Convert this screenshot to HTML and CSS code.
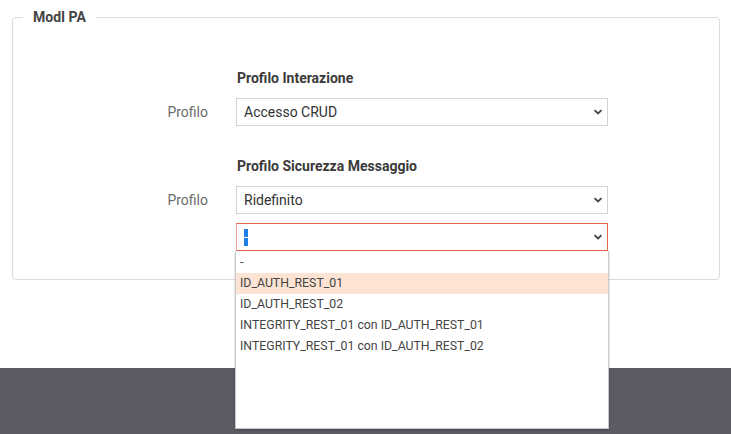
FILE: index.html
```html
<!DOCTYPE html>
<html lang="it">
<head>
<meta charset="utf-8">
<title>ModI PA</title>
<link rel="stylesheet" href="styles.css">
</head>
<body>
<main class="page">
  <section class="panel">
    <span class="legend">ModI PA</span>

    <div class="row head-row head-first">
      <div></div>
      <div class="heading">Profilo Interazione</div>
    </div>
    <div class="row sel-row gap-large">
      <label class="label">Profilo</label>
      <div class="select"><span class="value">Accesso CRUD</span><svg class="chev" width="10" height="6" viewBox="0 0 10 6"><path d="M1.5 1.2 L5 4.5 L8.5 1.2" fill="none" stroke="#444" stroke-width="1.8"/></svg></div>
    </div>

    <div class="row head-row">
      <div></div>
      <div class="heading">Profilo Sicurezza Messaggio</div>
    </div>
    <div class="row sel-row gap-small">
      <label class="label">Profilo</label>
      <div class="select"><span class="value">Ridefinito</span><svg class="chev" width="10" height="6" viewBox="0 0 10 6"><path d="M1.5 1.2 L5 4.5 L8.5 1.2" fill="none" stroke="#444" stroke-width="1.8"/></svg></div>
    </div>
    <div class="row sel-row">
      <div></div>
      <div class="select select-open">
        <span class="caret"></span>
        <svg class="chev" width="10" height="6" viewBox="0 0 10 6"><path d="M1.5 1.2 L5 4.5 L8.5 1.2" fill="none" stroke="#444" stroke-width="1.8"/></svg>
        <ul class="options">
          <li>-</li>
          <li class="active">ID_AUTH_REST_01</li>
          <li>ID_AUTH_REST_02</li>
          <li>INTEGRITY_REST_01 con ID_AUTH_REST_01</li>
          <li>INTEGRITY_REST_01 con ID_AUTH_REST_02</li>
        </ul>
      </div>
    </div>
  </section>
</main>
<footer class="footer"></footer>
</body>
</html>
```

FILE: styles.css
```css
* { box-sizing: border-box; }
html, body { margin: 0; padding: 0; background: #fff; }
body {
  font-family: Roboto, "Liberation Sans", Arial, sans-serif;
  font-size: 14px;
  color: #333;
  height: 434px;
  overflow: hidden;
}
.page { padding: 17px 11px 0 12px; }
.panel {
  position: relative;
  border: 1px solid #dcdcdc;
  border-radius: 4px;
  padding: 50px 0 28px;
}
.legend {
  position: absolute;
  top: -10px;
  left: 10px;
  padding: 0 10px;
  background: #fff;
  font-weight: 700;
  font-size: 14px;
  line-height: 18px;
  color: #444;
}
.row {
  display: grid;
  grid-template-columns: 195px 372px;
  column-gap: 28px;
  align-items: center;
}
.head-row { margin-bottom: 10px; }
.heading {
  font-weight: 700;
  font-size: 14px;
  line-height: 20px;
  color: #3a3a3a;
  padding-left: 1px;
}
.gap-large { margin-bottom: 30px; }
.gap-small { margin-bottom: 9px; }
.label {
  text-align: right;
  color: #6b6b6b;
  font-size: 14px;
  line-height: 20px;
}
.select {
  position: relative;
  height: 28px;
  border: 1px solid #d4d4d4;
  display: flex;
  align-items: center;
  padding: 0 4px 0 7px;
  background: #fff;
}
.select .value { flex: 1; color: #333; font-size: 14px; }
.chev { margin-left: auto; }
.select-open {
  border-color: #e2664a;
  border-left-color: #eea28f;
}
.caret {
  display: inline-block;
  width: 4px;
  height: 17px;
  background: linear-gradient(#1d80e2 0 47%, #fff 47% 55%, #1d80e2 55% 100%);
}
.options {
  position: absolute;
  z-index: 5;
  top: 27px;
  left: -2px;
  width: 374px;
  height: 178px;
  margin: 0;
  padding: 1px 0 0;
  list-style: none;
  background: #fff;
  border: 1px solid #c8c8c8;
  border-top: 0;
  box-shadow: 0 1px 2px rgba(0,0,0,0.25);
}
.options li {
  height: 21px;
  line-height: 21px;
  padding-left: 4px;
  font-size: 12.3px;
  color: #444;
}
.options li.active { background: #fde3d3; }
.footer {
  margin-top: 88px;
  height: 66px;
  background: #5b5c63;
}
```
